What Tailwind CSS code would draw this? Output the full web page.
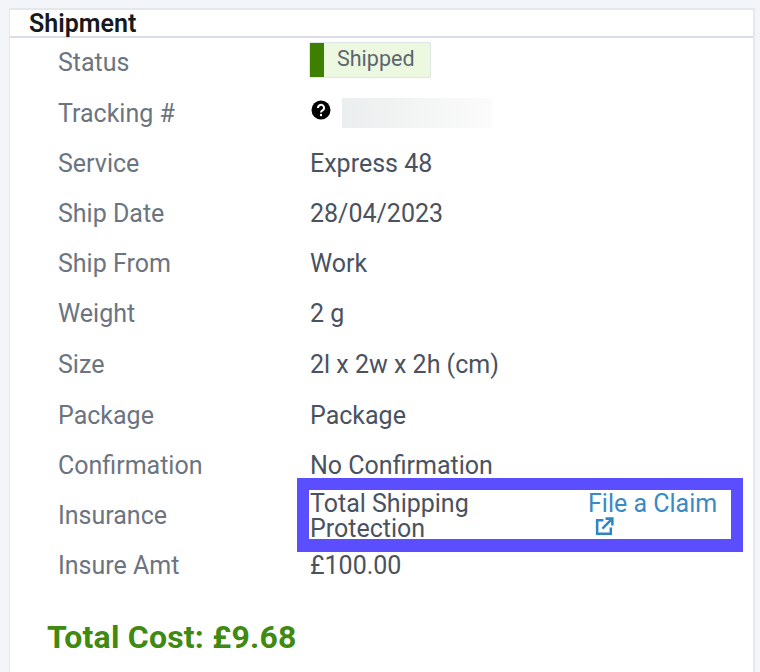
<!DOCTYPE html>
<html lang="en">
<head>
    <meta charset="UTF-8">
    <title>Shipment</title>
    <script src="https://cdn.jsdelivr.net/npm/@tailwindcss/browser@4"></script>
</head>
<body class="bg-[#f3f5f8] h-[672px] w-[760px] overflow-hidden font-['Roboto',sans-serif]">
    <div class="ml-[9px] mt-[8px] w-[746px] h-[664px] bg-white border-l border-r-2 border-t-2 border-[#e4e7ec]">
        <!-- Header -->
        <div class="h-[28px] border-b-2 border-[#d9dee8] pl-[19px] text-[25px] leading-[28px] font-semibold text-[#16191d]">Shipment</div>

        <!-- Rows -->
        <div class="pl-[48px] text-[25px] text-[#4a5260]">
            <div class="flex items-center h-[49px]">
                <div class="w-[251px] text-[#6b7480]">Status</div>
                <div class="flex h-[36px] w-[122px] bg-[#ecf8df] border border-[#dde6e6] rounded-[2px] -mt-[5px]">
                    <div class="w-[14px] bg-[#3f7f00]"></div>
                    <div class="pl-[13px] text-[21.5px] leading-[31px] text-[#5c6670]">Shipped</div>
                </div>
            </div>
            <div class="flex items-center h-[52px]">
                <div class="w-[252px] pt-[2px] text-[#6b7480]">Tracking #</div>
                <svg class="w-[20px] h-[20px] -mt-[6px] ml-[1px]" viewBox="0 0 20 20"><circle cx="10" cy="10" r="9.5" fill="#000"/><path d="M7 8a3 3 0 1 1 4.6 2.4c-1 .6-1.6 1-1.6 2" fill="none" stroke="#fff" stroke-width="2"/><circle cx="10" cy="15" r="1.2" fill="#fff"/></svg>
                <div class="ml-[11px] w-[150px] h-[30px] -mt-[1px] bg-gradient-to-r from-[#ebeeee] to-[#fbfbfb]"></div>
            </div>
            <div class="flex items-center h-[50px]"><div class="w-[252px] text-[#6b7480]">Service</div><div>Express 48</div></div>
            <div class="flex items-center h-[50px]"><div class="w-[252px] text-[#6b7480]">Ship Date</div><div>28/04/2023</div></div>
            <div class="flex items-center h-[50px]"><div class="w-[252px] text-[#6b7480]">Ship From</div><div>Work</div></div>
            <div class="flex items-center h-[50px]"><div class="w-[252px] text-[#6b7480]">Weight</div><div>2 g</div></div>
            <div class="flex items-center h-[52px]"><div class="w-[252px] text-[#6b7480]">Size</div><div>2l x 2w x 2h (cm)</div></div>
            <div class="flex items-center h-[50px]"><div class="w-[252px] text-[#6b7480]">Package</div><div>Package</div></div>
            <div class="flex items-center h-[50px]"><div class="w-[252px] text-[#6b7480]">Confirmation</div><div>No Confirmation</div></div>

            <!-- Insurance, highlighted -->
            <div class="flex items-center h-[50px]">
                <div class="w-[252px] text-[#6b7480]">Insurance</div>
                <div class="relative flex w-[421px] h-[50px] items-start leading-[25px]">
                    <div class="w-[278px]">Total Shipping<br>Protection</div>
                    <div class="text-[#3a8ac4] w-[135px]">
                        <div>File a Claim</div>
                        <svg class="ml-[6px] w-[21px] h-[21px]" viewBox="0 0 20 20" fill="none" stroke="#2f86c4" stroke-width="2.4"><path d="M9 4H3v13h13v-6"/><path d="M8 12 17 3M11 2.5H17.5V9"/></svg>
                    </div>
                    <div class="absolute -left-[13px] -top-[13px] w-[446px] h-[74px] border-x-[12px] border-t-[12px] border-b-[13px] border-[#5b4eff]"></div>
                </div>
            </div>
            <div class="flex items-center h-[50px]"><div class="w-[252px] text-[#6b7480]">Insure Amt</div><div>£100.00</div></div>
        </div>

        <div class="pl-[37px] mt-[26px] text-[32px] leading-[40px] tracking-[0.2px] font-bold text-[#3f8a10]">Total Cost: £9.68</div>
    </div>
</body>
</html>
